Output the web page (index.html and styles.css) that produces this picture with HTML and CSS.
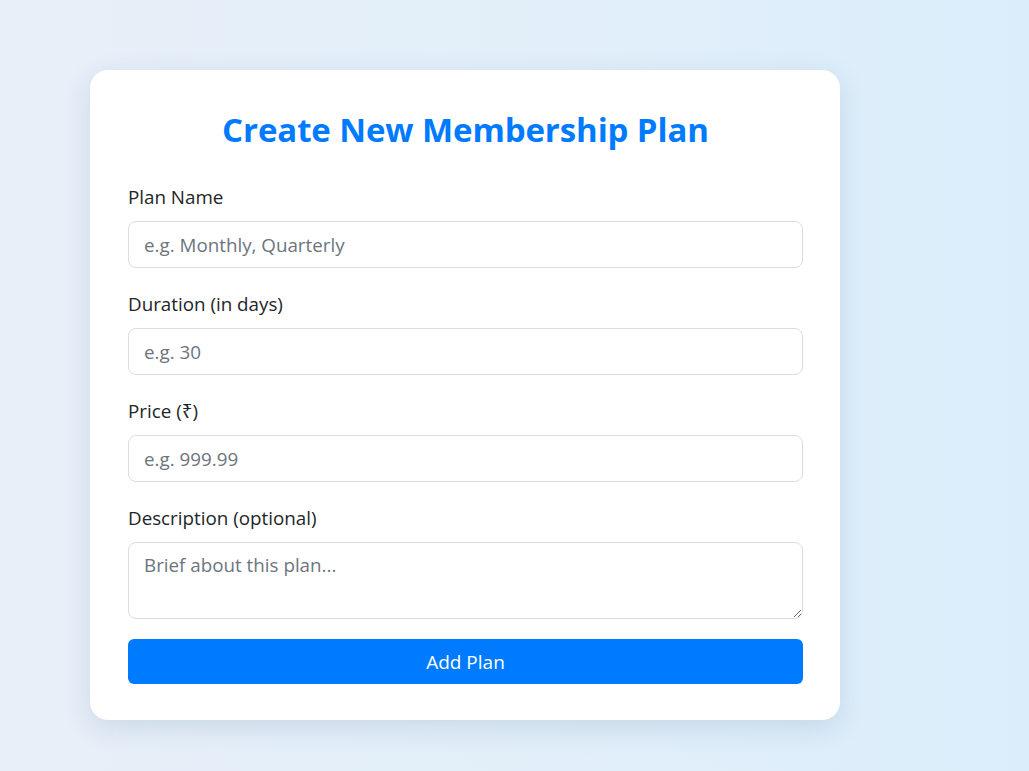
FILE: index.html
```html
<!DOCTYPE html>
<html lang="en">
<head>
<meta charset="utf-8">
<title>Create New Membership Plan</title>
<link rel="stylesheet" href="styles.css">
</head>
<body>
<main class="page">
  <form class="card">
    <h1 class="title">Create New Membership Plan</h1>
    <div class="group">
      <label class="label" for="name">Plan Name</label>
      <input class="field" id="name" type="text" placeholder="e.g. Monthly, Quarterly">
    </div>
    <div class="group">
      <label class="label" for="dur">Duration (in days)</label>
      <input class="field" id="dur" type="text" placeholder="e.g. 30">
    </div>
    <div class="group">
      <label class="label" for="price">Price (₹)</label>
      <input class="field" id="price" type="text" placeholder="e.g. 999.99">
    </div>
    <div class="group group-last">
      <label class="label" for="desc">Description (optional)</label>
      <textarea class="field area" id="desc" placeholder="Brief about this plan..."></textarea>
    </div>
    <button class="btn" type="button">Add Plan</button>
  </form>
</main>
</body>
</html>
```
FILE: styles.css
```css
* { box-sizing: border-box; }
html, body { margin: 0; height: 100%; }
body {
  font-family: "Open Sans", "Noto Sans", sans-serif;
  background: linear-gradient(90deg, #e8eff8 0%, #e2eff9 50%, #dbedfb 100%);
  color: #212529;
}
.page {
  padding: 70px 0 0 90px;
}
.card {
  width: 750px;
  background: #fff;
  border-radius: 18px;
  padding: 39px 37px 36px 38px;
  box-shadow: 0 8px 28px rgba(40, 80, 130, 0.14);
  display: flex;
  flex-direction: column;
}
.title {
  margin: 0 0 33px;
  text-align: center;
  color: #007bff;
  font-size: 33px;
  line-height: 42px;
  font-weight: 700;
  letter-spacing: -0.1px;
}
.group {
  display: flex;
  flex-direction: column;
  margin-bottom: 23px;
}
.group-last { margin-bottom: 20px; }
.label {
  font-size: 18.8px;
  line-height: 27px;
  margin-bottom: 10px;
  color: #212529;
}
.field {
  height: 47px;
  border: 1px solid #dcdcdc;
  border-radius: 8px;
  padding: 0 15px;
  font-family: inherit;
  font-size: 18.8px;
  color: #212529;
  background: #fff;
  outline: none;
}
.field::placeholder { color: #6c757d; }
.area {
  height: 77px;
  padding: 9px 15px;
  line-height: 27px;
  resize: vertical;
}
.btn {
  height: 45px;
  border: none;
  border-radius: 6px;
  background: #007bff;
  color: #fff;
  font-family: inherit;
  font-size: 19px;
  cursor: pointer;
}
```
